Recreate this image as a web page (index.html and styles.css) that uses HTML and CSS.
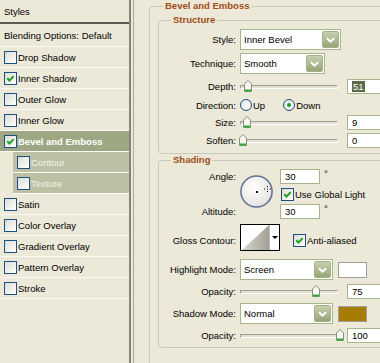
FILE: index.html
```html
<!DOCTYPE html>
<html lang="en">
<head>
<meta charset="utf-8">
<title>Layer Style</title>
<link rel="stylesheet" href="styles.css">
</head>
<body>
<div class="dialog">
  <aside class="styles-list">
    <div class="list-head">Styles</div>
    <div class="item blend">Blending Options: Default</div>
    <div class="item"><span class="cb"></span>Drop Shadow</div>
    <div class="item"><span class="cb"><svg class="chk" width="11" height="11" viewBox="0 0 11 11"><path d="M2.3 5.2 4.5 7.5 8.7 3.1" fill="none" stroke="#21a121" stroke-width="2"/></svg></span>Inner Shadow</div>
    <div class="item"><span class="cb"></span>Outer Glow</div>
    <div class="item"><span class="cb"></span>Inner Glow</div>
    <div class="item sel"><span class="cb"><svg class="chk" width="11" height="11" viewBox="0 0 11 11"><path d="M2.3 5.2 4.5 7.5 8.7 3.1" fill="none" stroke="#21a121" stroke-width="2"/></svg></span>Bevel and Emboss</div>
    <div class="item sub"><span class="cb"></span>Contour</div>
    <div class="item sub"><span class="cb"></span>Texture</div>
    <div class="item"><span class="cb"></span>Satin</div>
    <div class="item"><span class="cb"></span>Color Overlay</div>
    <div class="item"><span class="cb"></span>Gradient Overlay</div>
    <div class="item"><span class="cb"></span>Pattern Overlay</div>
    <div class="item"><span class="cb"></span>Stroke</div>
  </aside>

  <main class="panel">
    <fieldset class="grp outer">
      <legend>Bevel and Emboss</legend>

      <fieldset class="grp sub-grp">
        <legend>Structure</legend>
        <div class="row r-style">
          <span class="lbl">Style:</span>
          <div class="select w101"><span class="val">Inner Bevel</span><span class="btn"><svg width="9" height="6" viewBox="0 0 9 6"><path d="M1 1.2 4.5 4.6 8 1.2" fill="none" stroke="#fff" stroke-width="2"/></svg></span></div>
        </div>
        <div class="row r-tech">
          <span class="lbl">Technique:</span>
          <div class="select w85"><span class="val">Smooth</span><span class="btn"><svg width="9" height="6" viewBox="0 0 9 6"><path d="M1 1.2 4.5 4.6 8 1.2" fill="none" stroke="#fff" stroke-width="2"/></svg></span></div>
        </div>
        <div class="row r-depth">
          <span class="lbl">Depth:</span>
          <div class="slider"><span class="track"></span><svg class="thumb" style="left:4px" width="8" height="12" viewBox="0 0 8 12"><path d="M0.5 4 4 0.5 7.5 4 7.5 11.5 0.5 11.5Z" fill="#f6f6f2" stroke="#8c8c86"/><path d="M1 10.5h6" stroke="#2fae2f" stroke-width="2"/></svg></div>
          <div class="num"><span class="hl">51</span></div>
        </div>
        <div class="row r-dir">
          <span class="lbl">Direction:</span>
          <span class="radio"></span><span class="opt-up">Up</span>
          <span class="radio"><span class="dot"></span></span><span>Down</span>
        </div>
        <div class="row r-size">
          <span class="lbl">Size:</span>
          <div class="slider"><span class="track"></span><svg class="thumb" style="left:3px" width="8" height="12" viewBox="0 0 8 12"><path d="M0.5 4 4 0.5 7.5 4 7.5 11.5 0.5 11.5Z" fill="#f6f6f2" stroke="#8c8c86"/><path d="M1 10.5h6" stroke="#2fae2f" stroke-width="2"/></svg></div>
          <div class="num">9</div>
        </div>
        <div class="row r-soften">
          <span class="lbl">Soften:</span>
          <div class="slider"><span class="track"></span><svg class="thumb" style="left:-1px" width="8" height="12" viewBox="0 0 8 12"><path d="M0.5 4 4 0.5 7.5 4 7.5 11.5 0.5 11.5Z" fill="#f6f6f2" stroke="#8c8c86"/><path d="M1 10.5h6" stroke="#2fae2f" stroke-width="2"/></svg></div>
          <div class="num">0</div>
        </div>
      </fieldset>

      <fieldset class="grp sub-grp shading">
        <legend>Shading</legend>
        <div class="angle">
          <div class="lbls"><span>Angle:</span><span>Altitude:</span></div>
          <svg class="dial" width="33" height="33" viewBox="0 0 33 33">
            <defs>
              <radialGradient id="dg" cx="0.42" cy="0.38" r="0.7">
                <stop offset="0" stop-color="#ffffff"/>
                <stop offset="1" stop-color="#e0e0da"/>
              </radialGradient>
            </defs>
            <circle cx="16.5" cy="16.5" r="15.6" fill="url(#dg)" stroke="#5f6e99" stroke-width="1.5"/>
            <rect x="16" y="16" width="2" height="2" fill="#000"/>
            <g fill="#000">
              <rect x="27" y="11" width="1" height="1"/>
              <rect x="27" y="16" width="1" height="1"/>
              <rect x="24" y="13.5" width="1" height="1"/>
              <rect x="30" y="13.5" width="1" height="1"/>
              <rect x="27" y="13.5" width="1" height="1"/>
            </g>
          </svg>
          <div class="angle-vals">
            <div class="deg"><div class="num">30</div><span class="degsym">°</span></div>
            <div class="chkrow"><span class="cb"><svg class="chk" width="11" height="11" viewBox="0 0 11 11"><path d="M2.3 5.2 4.5 7.5 8.7 3.1" fill="none" stroke="#21a121" stroke-width="2"/></svg></span>Use Global Light</div>
            <div class="deg"><div class="num">30</div><span class="degsym">°</span></div>
          </div>
        </div>
        <div class="row r-gloss">
          <span class="lbl">Gloss Contour:</span>
          <div class="contour">
            <svg width="28" height="25" viewBox="0 0 28 25">
              <defs>
                <linearGradient id="cg" x1="0" y1="0" x2="1" y2="0">
                  <stop offset="0" stop-color="#d9d7cd"/>
                  <stop offset="1" stop-color="#a3a194"/>
                </linearGradient>
              </defs>
              <rect width="28" height="25" fill="#fff"/>
              <polygon points="1,25 28,0 28,25" fill="url(#cg)"/>
            </svg>
            <span class="carrow"><span class="tri"></span></span>
          </div>
          <div class="aa"><span class="cb"><svg class="chk" width="11" height="11" viewBox="0 0 11 11"><path d="M2.3 5.2 4.5 7.5 8.7 3.1" fill="none" stroke="#21a121" stroke-width="2"/></svg></span>Anti-aliased</div>
        </div>
        <div class="row r-mode">
          <span class="lbl">Highlight Mode:</span>
          <div class="select w93"><span class="val">Screen</span><span class="btn"><svg width="9" height="6" viewBox="0 0 9 6"><path d="M1 1.2 4.5 4.6 8 1.2" fill="none" stroke="#fff" stroke-width="2"/></svg></span></div>
          <span class="swatch sw-white"></span>
        </div>
        <div class="row r-op">
          <span class="lbl">Opacity:</span>
          <div class="slider"><span class="track"></span><svg class="thumb" style="left:72px" width="8" height="12" viewBox="0 0 8 12"><path d="M0.5 4 4 0.5 7.5 4 7.5 11.5 0.5 11.5Z" fill="#f6f6f2" stroke="#8c8c86"/><path d="M1 10.5h6" stroke="#2fae2f" stroke-width="2"/></svg></div>
          <div class="num">75</div>
        </div>
        <div class="row r-mode r-mode2">
          <span class="lbl">Shadow Mode:</span>
          <div class="select w93"><span class="val">Normal</span><span class="btn"><svg width="9" height="6" viewBox="0 0 9 6"><path d="M1 1.2 4.5 4.6 8 1.2" fill="none" stroke="#fff" stroke-width="2"/></svg></span></div>
          <span class="swatch sw-brown"></span>
        </div>
        <div class="row r-op">
          <span class="lbl">Opacity:</span>
          <div class="slider"><span class="track"></span><svg class="thumb" style="left:96px" width="8" height="12" viewBox="0 0 8 12"><path d="M0.5 4 4 0.5 7.5 4 7.5 11.5 0.5 11.5Z" fill="#f6f6f2" stroke="#8c8c86"/><path d="M1 10.5h6" stroke="#2fae2f" stroke-width="2"/></svg></div>
          <div class="num">100</div>
        </div>
      </fieldset>
    </fieldset>
  </main>
</div>
</body>
</html>
```

FILE: styles.css
```css
* { box-sizing: border-box; }
html, body { margin: 0; padding: 0; }
body {
  width: 380px;
  height: 363px;
  overflow: hidden;
  background: #ece9d8;
  font-family: "Liberation Sans", Arial, sans-serif;
  font-size: 9.5px;
  color: #000;
}
.dialog { display: flex; height: 363px; }

/* left list */
.styles-list {
  width: 131px;
  flex: none;
  height: 363px;
  border-right: 2px solid #85837a;
  box-shadow: 2px 0 0 #ece9d8, 3px 0 0 #aeac9f;
}
.list-head {
  height: 24px;
  padding-left: 4px;
  display: flex;
  align-items: center;
  border-bottom: 2px solid #5b5a52;
}
.item {
  height: 21px;
  display: flex;
  align-items: center;
  padding-left: 4px;
  border-bottom: 1px solid #fbfaf4;
  white-space: nowrap;
}
.item.blend { height: 23px; }
.item.sel { background: #9da783; color: #fff; font-weight: bold; }
.item.sub { margin-left: 13px; background: #bcc1a5; color: #f2f2ea; }

.cb {
  width: 13px;
  height: 13px;
  flex: none;
  border: 1px solid #1c5180;
  background: linear-gradient(135deg, #dcdcd6, #ffffff);
  margin-right: 1px;
  display: flex;
}
.chk { display: block; }

/* right panel */
.panel { flex: 1; min-width: 0; padding-left: 18px; overflow: hidden; }
fieldset.grp {
  margin: 0;
  border: 1px solid #cac8b8;
  border-radius: 4px;
  min-width: 0;
}
.grp > legend {
  font-weight: bold;
  color: #a04d16;
  padding: 0 2px;
  line-height: 12px;
}
.outer { width: 320px; padding: 2px 0 20px 8px; }
.outer > legend { margin-left: 5px; }
.sub-grp { width: 262px; padding: 3px 0 3px 0; }
.sub-grp > legend { margin-left: 12px; }
.shading { margin-top: 12px; padding-bottom: 4px; }

.row { display: flex; align-items: center; white-space: nowrap; }
.lbl { width: 77px; flex: none; margin-right: 4px; text-align: right; }
.r-style { height: 21px; }
.r-tech { height: 21px; margin-top: 3px; }
.r-depth { height: 19px; margin-top: 3px; }
.r-dir { height: 18px; }
.r-size { height: 17px; }
.r-soften { height: 19px; }

.select {
  height: 21px;
  flex: none;
  border: 1px solid #a7b78d;
  background: #fff;
  display: flex;
  align-items: center;
  justify-content: space-between;
  padding: 0 1px 0 3px;
}
.w101 { width: 101px; }
.w85 { width: 85px; }
.w93 { width: 93px; }
.btn {
  width: 17px;
  height: 17px;
  border-radius: 2px;
  border: 1px solid #a3b186;
  background: linear-gradient(#c8d0b0, #96a476);
  display: flex;
  align-items: center;
  justify-content: center;
}

.slider { position: relative; width: 98px; height: 13px; flex: none; }
.track {
  position: absolute;
  left: 0;
  right: 0;
  top: 5px;
  height: 4px;
  border: 1px solid #a19f94;
  border-right-color: #fff;
  border-bottom-color: #fff;
  background: #e2dfd2;
}
.thumb { position: absolute; top: 0; }

.num {
  width: 40px;
  height: 15px;
  flex: none;
  margin-left: 9px;
  border: 1px solid #a7b78d;
  background: #fff;
  padding-left: 4px;
  line-height: 13px;
}
.hl { background: #5d6a48; color: #fff; padding: 0 1px; }

.radio {
  width: 12px;
  height: 12px;
  flex: none;
  border-radius: 50%;
  border: 1px solid #1c5180;
  background: radial-gradient(circle at 60% 60%, #fff, #dcdcd6);
  display: flex;
  align-items: center;
  justify-content: center;
  margin-right: 1px;
}
.dot { width: 4px; height: 4px; border-radius: 50%; background: #21a121; }
.opt-up { margin-right: 18px; }

/* shading */
.angle { display: flex; height: 50px; }
.lbls {
  width: 77px;
  flex: none;
  margin-right: 4px;
  display: flex;
  flex-direction: column;
  justify-content: space-between;
  align-items: flex-end;
  line-height: 15px;
}
.dial { flex: none; margin-top: 6px; display: block; }
.angle-vals { margin-left: 7px; display: flex; flex-direction: column; }
.deg { display: flex; height: 15px; }
.deg .num { margin-left: 0; }
.degsym { margin-left: 4px; line-height: 9px; }
.chkrow { display: flex; align-items: center; height: 13px; margin: 4px 0 3px 1px; white-space: nowrap; }

.r-gloss { height: 27px; margin-top: 5px; }
.r-gloss .lbl { padding-top: 5px; }
.contour {
  width: 40px;
  height: 27px;
  flex: none;
  border: 1px solid #000;
  background: #fff;
  display: flex;
}
.contour svg { display: block; }
.carrow {
  flex: 1;
  border-left: 1px solid #bdbdb5;
  display: flex;
  align-items: center;
  justify-content: center;
}
.tri {
  width: 0;
  height: 0;
  border-top: 3px solid #000;
  border-left: 3px solid transparent;
  border-right: 3px solid transparent;
}
.aa { display: flex; align-items: center; margin-left: 13px; padding-top: 6px; }

.r-mode { height: 21px; margin-top: 8px; }
.r-mode2 { margin-top: 4px; }
.r-op { height: 15px; margin-top: 4px; }
.swatch { width: 29px; height: 16px; flex: none; margin-left: 5px; border: 1px solid #a09f98; }
.sw-white { background: #fff; }
.sw-brown { background: #a77c05; }
```
